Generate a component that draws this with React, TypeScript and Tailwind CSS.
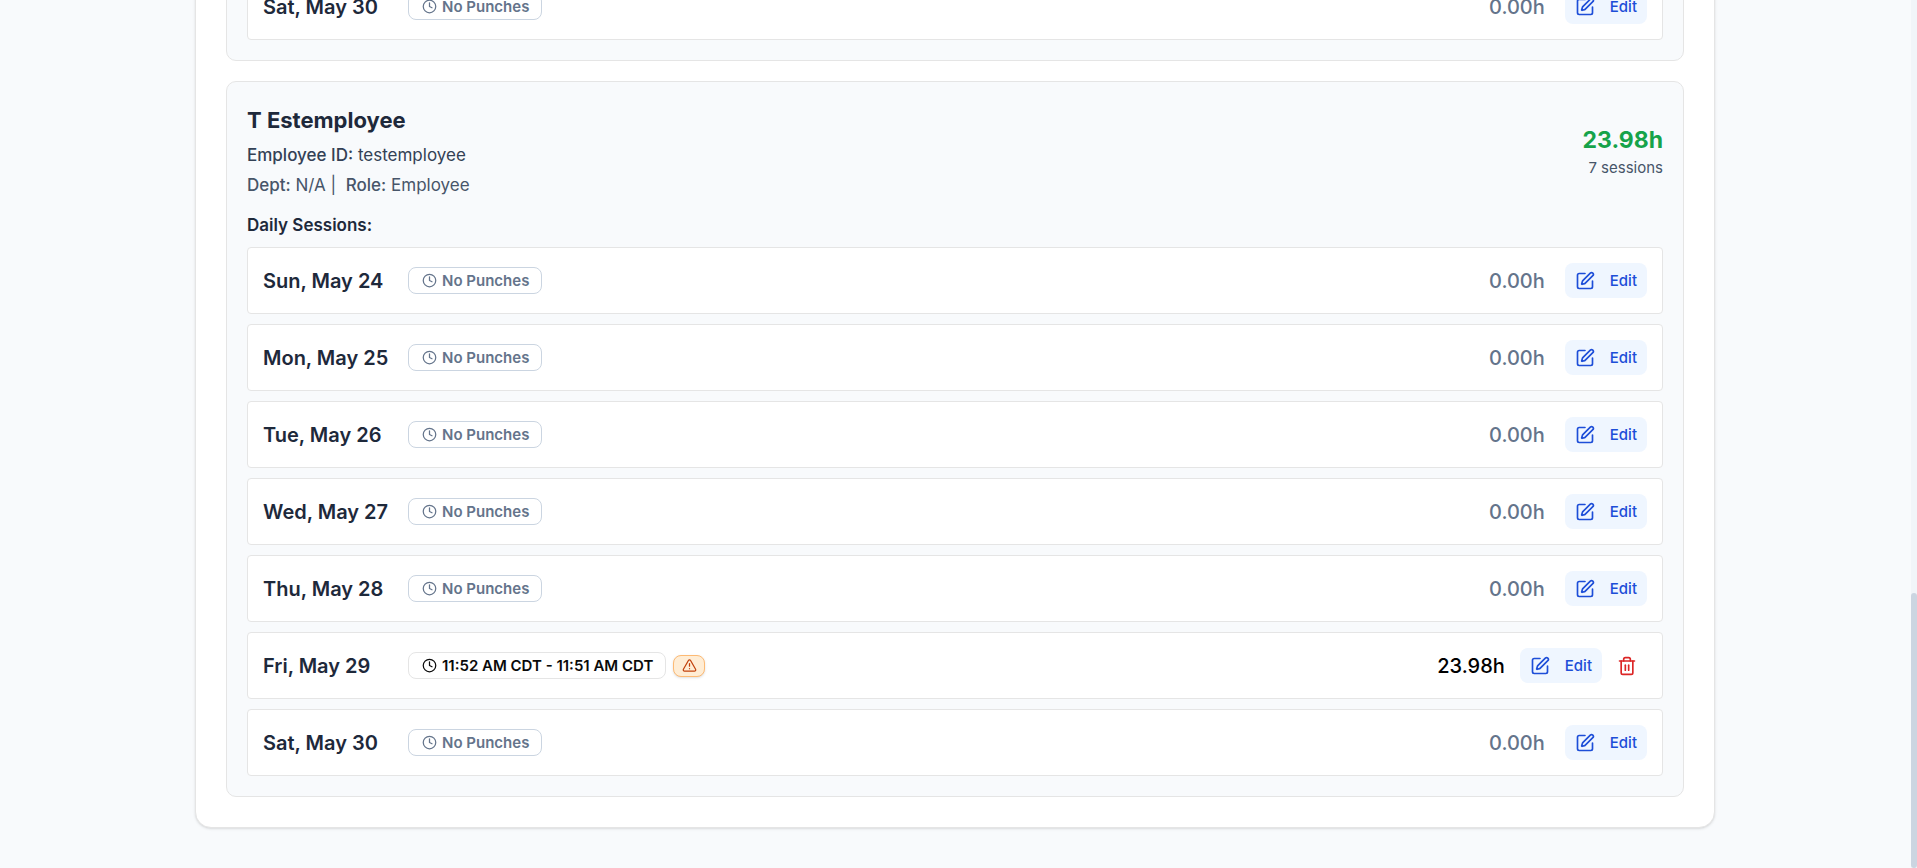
import { Clock, SquarePen, Trash2, TriangleAlert } from "lucide-react";

type Session = { day: string; punches?: string; hours: string };

const week: Session[] = [
  { day: "Sun, May 24", hours: "0.00h" },
  { day: "Mon, May 25", hours: "0.00h" },
  { day: "Tue, May 26", hours: "0.00h" },
  { day: "Wed, May 27", hours: "0.00h" },
  { day: "Thu, May 28", hours: "0.00h" },
  { day: "Fri, May 29", punches: "11:52 AM CDT - 11:51 AM CDT", hours: "23.98h" },
  { day: "Sat, May 30", hours: "0.00h" },
];

function EditButton() {
  return (
    <button
      type="button"
      className="flex h-[35px] items-center gap-[15px] rounded-lg bg-[#eff6ff] px-2.5 text-[15px] leading-[25px] font-medium text-[#1d4ed8]"
    >
      <SquarePen className="size-5" />
      Edit
    </button>
  );
}

function SessionRow({ session }: { session: Session }) {
  const { day, punches, hours } = session;
  return (
    <li className="flex items-center justify-between rounded border border-[#e5e5e5] bg-white p-[15px]">
      <div className="flex items-center gap-5">
        <span className="w-[125px] whitespace-nowrap text-[20px] leading-[30px] font-semibold text-[#1e293b]">
          {day}
        </span>
        <div className="flex items-center gap-[7px]">
          <span
            className={
              punches
                ? "flex h-[27px] items-center gap-[5px] rounded-lg border border-[#e5e5e5] pr-3 pl-[13px] text-[15px] leading-[25px] font-semibold text-[#0a0a0a]"
                : "flex h-[27px] items-center gap-[5px] rounded-lg border border-[#cbd5e1] pr-3 pl-[13px] text-[15px] leading-[25px] font-semibold text-[#64748b]"
            }
          >
            <Clock className="size-[15px]" />
            {punches ?? "No Punches"}
          </span>
          {punches && (
            <span className="flex h-[22px] w-8 items-center justify-center rounded-lg border border-[#fdba74] bg-[#ffedd5] text-[#c2410c] shadow-sm">
              <TriangleAlert className="size-[15px]" />
            </span>
          )}
        </div>
      </div>
      {punches ? (
        <div className="flex items-center gap-[15px]">
          <span className="text-[20px] leading-[30px] font-medium text-black">{hours}</span>
          <div className="flex items-center gap-[5px]">
            <EditButton />
            <button
              type="button"
              aria-label="Delete"
              className="flex h-[35px] w-10 items-center justify-center rounded-lg text-[#dc2626]"
            >
              <Trash2 className="size-5" />
            </button>
          </div>
        </div>
      ) : (
        <div className="flex items-center gap-5">
          <span className="text-[20px] leading-[30px] font-medium text-[#64748b]">{hours}</span>
          <EditButton />
        </div>
      )}
    </li>
  );
}

export default function App() {
  return (
    <div className="flex h-screen bg-[#f8fafc] font-['Inter',sans-serif]">
      <main className="flex min-w-0 flex-1 flex-col items-center justify-end overflow-hidden pr-px pb-10">
        <div className="flex w-full max-w-[1520px] shrink-0 flex-col gap-5 rounded-2xl border border-[#e5e5e5] bg-white p-[30px] shadow-sm">
          <section className="rounded-[10px] border border-[#e5e5e5] bg-[#f8fafc] p-5">
            <ul>
              <SessionRow session={week[6]} />
            </ul>
          </section>
          <section className="rounded-[10px] border border-[#e5e5e5] bg-[#f8fafc] p-5">
            <header className="flex items-center justify-between">
              <div className="flex flex-col gap-[5px]">
                <h3 className="text-[22px] leading-9 font-bold text-[#1e293b]">T Estemployee</h3>
                <p className="text-[17px] leading-[25px] text-[#334155]">
                  <span className="font-medium">Employee ID:</span> testemployee
                </p>
                <p className="text-[17px] leading-[25px] text-[#475569]">
                  <span className="font-medium">Dept:</span> N/A |&nbsp;{" "}
                  <span className="font-medium">Role:</span> Employee
                </p>
              </div>
              <div className="text-right">
                <div className="text-[23px] leading-[35px] font-bold text-[#16a34a]">23.98h</div>
                <div className="text-[15px] leading-[19px] text-[#475569]">7 sessions</div>
              </div>
            </header>
            <h4 className="mt-[15px] text-[17px] leading-[25px] font-semibold text-[#1e293b]">
              Daily Sessions:
            </h4>
            <ul className="mt-[9px] flex flex-col gap-2.5">
              {week.map((session) => (
                <SessionRow key={session.day} session={session} />
              ))}
            </ul>
          </section>
        </div>
      </main>
      <div className="flex w-1.5 flex-col justify-end bg-[#f1f5f9]">
        <div className="h-[31.7%] rounded-[3px] bg-[#cbd5e1]" />
      </div>
    </div>
  );
}
